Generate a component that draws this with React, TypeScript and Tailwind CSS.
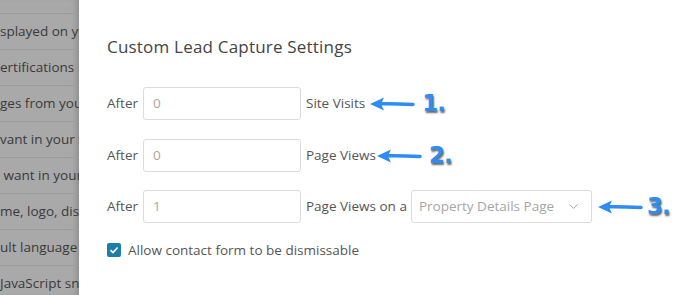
import { ChevronDown } from 'lucide-react'

const sideRows = [
  'splayed on your',
  'ertifications',
  'ges from your',
  'vant in your s',
  ' want in your',
  'me, logo, disp',
  'ult language',
  'JavaScript sn',
]

function Arrow() {
  return (
    <svg width="46" height="16" viewBox="0 0 46 16" className="shrink-0">
      <path d="M44 8.5 C34 8 22 7.5 12 7.8" stroke="#2e8cf2" strokeWidth="3.5" fill="none" strokeLinecap="round" />
      <path d="M1 8 L15 1.5 L12 8 L15 14.5 Z" fill="#2e8cf2" />
    </svg>
  )
}

function Step({ n }: { n: string }) {
  return (
    <span className="font-['DejaVu_Sans',sans-serif] text-[23px] font-bold leading-none tracking-[-1px] text-[#2e8cf2] [-webkit-text-stroke:3px_white] [paint-order:stroke_fill] [text-shadow:1px_2px_2px_rgba(0,0,0,0.6)]">
      {n}
    </span>
  )
}

function TextBox({ value }: { value: string }) {
  return (
    <div className="flex h-[33px] w-[158px] items-center rounded-[3px] border border-[#dcdcdc] bg-white px-[9px] text-[13.5px] text-[#a6a6a6]">
      {value}
    </div>
  )
}

export default function App() {
  return (
    <div className="flex h-[295px] w-[678px] overflow-hidden bg-white font-['Open_Sans',sans-serif]">
      {/* dimmed list behind the panel */}
      <div className="flex w-[79px] shrink-0 flex-col bg-[#a9a9a9] pt-[13px] shadow-[inset_-6px_0_6px_-4px_rgba(0,0,0,0.18)]">
        {sideRows.map((row, i) => (
          <div
            key={i}
            className="flex h-[36px] shrink-0 items-center overflow-hidden whitespace-pre border-t border-[#9c9c9c] text-[13.5px] text-[#3a3a3a]"
          >
            {row}
          </div>
        ))}
      </div>

      {/* panel */}
      <div className="flex flex-1 flex-col pl-[28px] pt-[36px] text-[13.5px] text-[#555]">
        <h2 className="text-[17px] leading-[22px] tracking-[0.2px] text-[#444]">Custom Lead Capture Settings</h2>

        <div className="mt-[29px] flex h-[33px] items-center">
          <span className="w-[36px]">After</span>
          <TextBox value="0" />
          <span className="ml-[5px]">Site Visits</span>
          <div className="ml-[4px] flex items-center gap-[7px]">
            <Arrow />
            <Step n="1." />
          </div>
        </div>

        <div className="mt-[19px] flex h-[33px] items-center">
          <span className="w-[36px]">After</span>
          <TextBox value="0" />
          <span className="ml-[5px]">Page Views</span>
          <div className="flex items-center gap-[7px]">
            <Arrow />
            <Step n="2." />
          </div>
        </div>

        <div className="mt-[18px] flex h-[33px] items-center">
          <span className="w-[36px]">After</span>
          <TextBox value="1" />
          <span className="ml-[5px]">Page Views on a</span>
          <div className="ml-[4px] flex h-[33px] w-[181px] items-center justify-between rounded-[3px] border border-[#dcdcdc] bg-white pl-[7px] pr-[10px] text-[#a6a6a6]">
            <span>Property Details Page</span>
            <ChevronDown size={15} strokeWidth={1.5} className="text-[#9a9a9a]" />
          </div>
          <div className="ml-[5px] flex items-center gap-[4px]">
            <Arrow />
            <Step n="3." />
          </div>
        </div>

        <label className="mt-[17px] flex items-center gap-[7px]">
          <span className="flex h-[14px] w-[14px] items-center justify-center rounded-[2px] bg-[#1c7ea6]">
            <svg width="10" height="10" viewBox="0 0 10 10">
              <path d="M1.5 5.2 L4 7.6 L8.6 2.5" stroke="white" strokeWidth="1.6" fill="none" />
            </svg>
          </span>
          <span>Allow contact form to be dismissable</span>
        </label>
      </div>
    </div>
  )
}
